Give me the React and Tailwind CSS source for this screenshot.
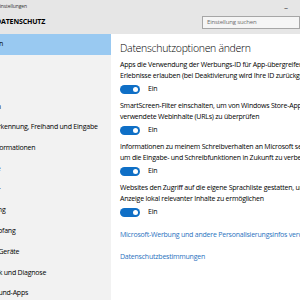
import React from "react";

const items = [
  "Allgemein",
  "Position",
  "Kamera",
  "Mikrofon",
  "Spracherkennung, Freihand und Eingabe",
  "Kontoinformationen",
  "Kontakte",
  "Kalender",
  "Messaging",
  "Funkempfang",
  "Weitere Geräte",
  "Feedback und Diagnose",
  "Hintergrund-Apps",
];

const blocks = [
  ["Apps die Verwendung der Werbungs-ID für App-übergreifende", "Erlebnisse erlauben (bei Deaktivierung wird Ihre ID zurückgesetzt)"],
  ["SmartScreen-Filter einschalten, um von Windows Store-Apps", "verwendete Webinhalte (URLs) zu überprüfen"],
  ["Informationen zu meinem Schreibverhalten an Microsoft senden,", "um die Eingabe- und Schreibfunktionen in Zukunft zu verbessern"],
  ["Websites den Zugriff auf die eigene Sprachliste gestatten, um die", "Anzeige lokal relevanter Inhalte zu ermöglichen"],
];

function Toggle() {
  return (
    <div className="flex items-center h-[10px] mt-[3px]">
      <div className="w-[20px] h-[9px] rounded-full bg-[#0f6fc6] flex items-center justify-end pr-[2px]">
        <div className="w-[5px] h-[5px] rounded-full bg-white" />
      </div>
      <span className="ml-[8px] text-[7px] tracking-[-0.2px] leading-[10px] text-black">Ein</span>
    </div>
  );
}

export default function App() {
  return (
    <div
      className="w-[300px] h-[300px] overflow-hidden flex flex-col bg-white"
      style={{ fontFamily: '"Open Sans", "Noto Sans", sans-serif' }}
    >
      <div className="h-[34px] bg-[#e6e6e6] flex flex-col shrink-0">
        <div className="h-[14px] flex items-center justify-between">
          <span className="ml-[-3px] text-[5px] tracking-[-0.1px] text-[#333]">Einstellungen</span>
          <span className="mr-[12px] text-[8px] text-[#333] leading-none">–</span>
        </div>
        <div className="flex items-center justify-between h-[16px]">
          <span className="ml-[-4px] text-[7px] font-bold text-black tracking-[-0.15px]">DATENSCHUTZ</span>
          <div className="w-[98px] h-[13px] border border-[#a6a6a6] bg-[#f5f5f5] flex items-center pl-[4px] mt-[1px]">
            <span className="text-[6px] tracking-[-0.15px] text-[#6d6d6d]">Einstellung suchen</span>
          </div>
        </div>
      </div>
      <div className="flex flex-1">
        <div className="w-[111px] bg-[#f2f2f2] overflow-hidden shrink-0">
          {items.map((t, i) => (
            <div
              key={t}
              className={
                "flex items-center whitespace-nowrap " +
                (i === 0 ? "h-[21px] bg-[#99c9f1]" : "h-[20.75px]")
              }
            >
              <span className="ml-[-27px] text-[7px] tracking-[-0.22px] text-black">{t}</span>
            </div>
          ))}
        </div>
        <div className="flex-1 pl-[9px] pt-[6px] whitespace-nowrap overflow-hidden">
          <div className="text-[10.5px] tracking-[-0.3px] font-light leading-[16px] text-black">Datenschutzoptionen ändern</div>
          <div className="mt-[3px] flex flex-col gap-[6px]">
            {blocks.map((b, i) => (
              <div key={i}>
                <div className="text-[7px] tracking-[-0.22px] leading-[11px] text-black">{b[0]}</div>
                <div className="text-[7px] tracking-[-0.22px] leading-[11px] text-black">{b[1]}</div>
                <Toggle />
              </div>
            ))}
          </div>
          <div className="mt-[12px] text-[7px] tracking-[-0.22px] leading-[11px] text-[#2a73c0]">
            Microsoft-Werbung und andere Personalisierungsinfos verwalten
          </div>
          <div className="mt-[11px] text-[7px] tracking-[-0.22px] leading-[11px] text-[#2a73c0]">Datenschutzbestimmungen</div>
        </div>
      </div>
    </div>
  );
}
